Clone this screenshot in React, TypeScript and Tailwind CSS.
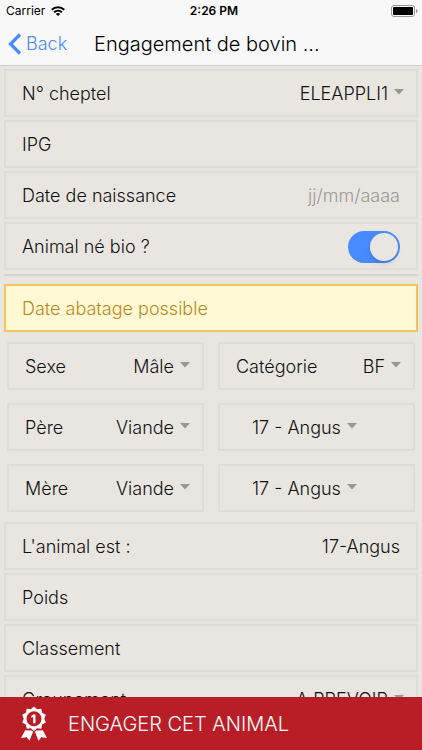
import { useState, type ReactNode } from "react";

const rowBox =
  "flex h-12 items-center border-2 border-[#dfdcd9] px-4 pt-0.5 text-lg text-[#111]";

function Caret() {
  return (
    <svg viewBox="0 0 10 6" className="mb-1 ml-1.5 h-1.5 w-2.5 shrink-0" fill="#989795">
      <path d="M0 0h10L5 5.5z" />
    </svg>
  );
}

function SelectField({ label, id, options }: { label: string; id?: string; options: string[] }) {
  return (
    <span className="-mr-1 flex items-center">
      <select
        id={id}
        aria-label={label}
        className="appearance-none bg-transparent outline-none [field-sizing:content]"
      >
        {options.map((option) => (
          <option key={option}>{option}</option>
        ))}
      </select>
      <Caret />
    </span>
  );
}

function Row({ label, id, children }: { label: string; id: string; children?: ReactNode }) {
  return (
    <div className={rowBox}>
      <label htmlFor={id} className="shrink-0">
        {label}
      </label>
      <div className="flex min-w-0 flex-1 items-center justify-end">
        {children ?? (
          <input id={id} className="w-full bg-transparent pl-4 text-right outline-none" />
        )}
      </div>
    </div>
  );
}

function Cell({ label, id, options }: { label: string; id: string; options: string[] }) {
  return (
    <div className={`${rowBox} justify-between`}>
      <label htmlFor={id}>{label}</label>
      <SelectField id={id} label={label} options={options} />
    </div>
  );
}

function BreedCell({ label }: { label: string }) {
  return (
    <div className={`${rowBox} pl-8`}>
      <SelectField label={label} options={["17 - Angus", "34 - Limousine", "38 - Charolaise"]} />
    </div>
  );
}

function StatusBar() {
  return (
    <div className="grid h-[22px] grid-cols-3 items-center pl-1.5 text-black">
      <div className="flex items-center gap-1.5 text-xs font-normal">
        Carrier
        <svg viewBox="0 0 14 10" className="h-2.5 w-3.5" fill="none" stroke="#000" strokeWidth="2">
          <path d="M.8 3.8C4.2.4 9.8.4 13.2 3.8" />
          <path d="M3.1 6.3c2.2-2.2 5.6-2.2 7.8 0" />
          <path d="M7 10 4.9 7.9c1.2-1.1 3-1.1 4.2 0z" fill="#000" stroke="none" />
        </svg>
      </div>
      <div className="text-center text-xs font-semibold">2:26 PM</div>
      <div className="flex justify-end pr-1">
        <svg viewBox="0 0 27 12" className="h-3 w-[27px]">
          <rect x=".5" y=".5" width="23" height="11" rx="2.5" fill="none" stroke="#999" />
          <rect x="2" y="2" width="20" height="8" rx="1" fill="#000" />
          <path d="M25 4c2 .5 2 3.5 0 4z" fill="#999" />
        </svg>
      </div>
    </div>
  );
}

function Award() {
  return (
    <svg viewBox="0 0 28 36" className="h-9 w-7" fill="#fff">
      <path d="M14 .5l3.2 2.7 4.1-.5.8 4.1 3.7 2-1.5 3.9 1.5 3.9-3.7 2-.8 4.1-4.1-.5L14 24.9l-3.2-2.7-4.1.5-.8-4.1-3.7-2 1.5-3.9-1.5-3.9 3.700-2 .8-4.100 4.100.5z" />
      <circle cx="14" cy="12.7" r="7.5" fill="#b91e26" />
      <path d="M13.3 8.500h2.200v8.800h-2.300v-6.200l-1.900.7V9.900z" />
      <path d="M5.2 24.300l4.300.1 2.300.2 1.300 1.100L9.500 34.800l-2.700-3.500-5.800.6z" />
      <path d="M22.8 24.300l-4.300.1-2.300.2-1.300 1.100 3.600 9.100 2.700-3.500 5.800.6z" />
    </svg>
  );
}

export default function App() {
  const [bio, setBio] = useState(true);

  return (
    <div className="flex h-screen flex-col bg-[#e9e6e1] font-['Inter','Liberation_Sans',sans-serif] font-light">
      <header className="shrink-0 border-b border-[#d0cfcd] bg-[#f8f8f8]">
        <StatusBar />
        <div className="flex h-[43px] items-center pl-2 text-lg">
          <button className="flex w-[86px] items-center gap-1 text-[#488aff]">
            <svg
              viewBox="0 0 14 22"
              className="h-[22px] w-3.5"
              fill="none"
              stroke="currentColor"
              strokeWidth="3.2"
            >
              <path d="M12 1.5 2.5 11l9.5 9.5" />
            </svg>
            Back
          </button>
          <h1 className="truncate text-xl font-light text-black">Engagement de bovin ...</h1>
        </div>
      </header>

      <main className="min-h-0 flex-1 overflow-y-auto px-1 pt-[3px] [scrollbar-width:none]">
        <div className="flex flex-col gap-[3px]">
          <Row label="N° cheptel" id="cheptel">
            <SelectField id="cheptel" label="N° cheptel" options={["ELEAPPLI1", "ELEAPPLI2"]} />
          </Row>
          <Row label="IPG" id="ipg" />
          <Row label="Date de naissance" id="naissance">
            <input
              id="naissance"
              placeholder="jj/mm/aaaa"
              className="w-full bg-transparent text-right outline-none placeholder:text-[#999]"
            />
          </Row>
          <Row label="Animal né bio ?" id="bio">
            <input
              id="bio"
              type="checkbox"
              role="switch"
              checked={bio}
              onChange={(e) => setBio(e.target.checked)}
              className="h-8 w-[52px] appearance-none rounded-full bg-[#c4c4c4] p-0.5 before:block before:size-7 before:rounded-full before:bg-[#e9e6e1] before:shadow-md checked:bg-[#488aff] checked:before:ml-5"
            />
          </Row>
        </div>

        <hr className="mt-1 border-t-2 border-[#d5d3d4]" />

        <div className="mt-2 flex h-12 items-center border-2 border-[#f0c560] bg-[#fff8d4] px-4 pt-0.5 text-lg text-[#b88a1c]">
          Date abatage possible
        </div>

        <div className="grid grid-cols-2 gap-x-3.5 gap-y-[13px] px-[3px] py-2.5">
          <Cell id="sexe" label="Sexe" options={["Mâle", "Femelle"]} />
          <Cell id="categorie" label="Catégorie" options={["BF", "GB"]} />
          <Cell id="pere" label="Père" options={["Viande", "Lait"]} />
          <BreedCell label="Race du père" />
          <Cell id="mere" label="Mère" options={["Viande", "Lait"]} />
          <BreedCell label="Race de la mère" />
        </div>

        <div className="flex flex-col gap-[3px]">
          <div className={`${rowBox} justify-between`}>
            <span>L'animal est :</span>
            <span>17-Angus</span>
          </div>
          <Row label="Poids" id="poids" />
          <Row label="Classement" id="classement" />
          <Row label="Groupement" id="groupement">
            <SelectField id="groupement" label="Groupement" options={["A PREVOIR", "AUCUN"]} />
          </Row>
        </div>
      </main>

      <button className="flex h-[53px] shrink-0 items-center gap-5 bg-[#b91e26] pl-5 text-xl text-white">
        <Award />
        ENGAGER CET ANIMAL
      </button>
    </div>
  );
}
